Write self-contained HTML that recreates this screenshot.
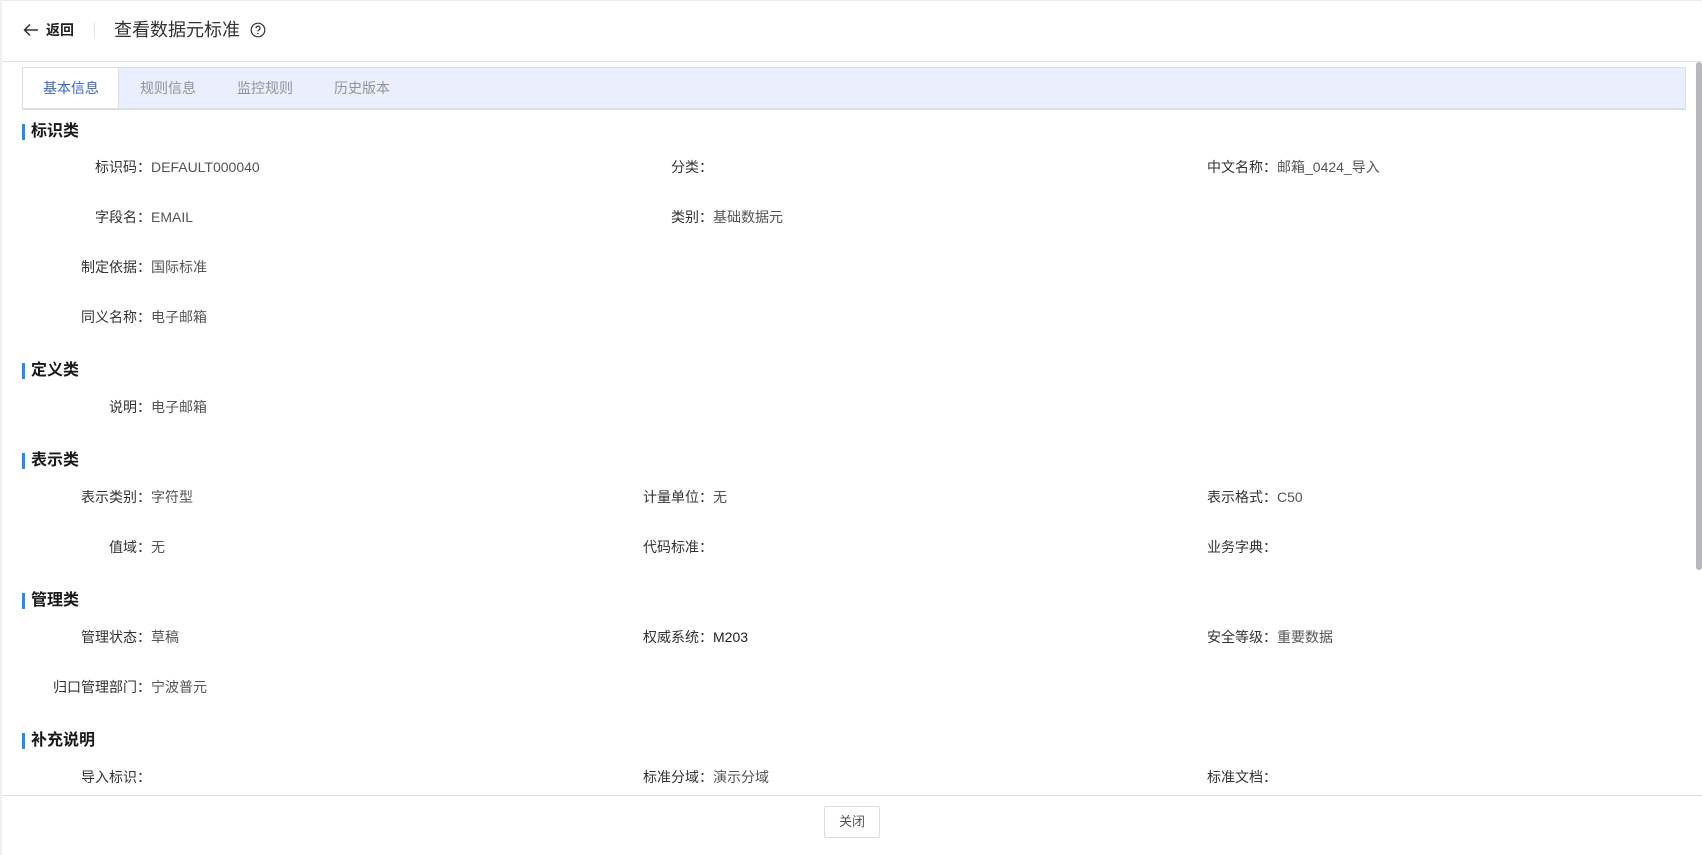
<!DOCTYPE html>
<html><head><meta charset="utf-8"><style>
*{margin:0;padding:0;box-sizing:border-box}
body{width:1702px;height:855px;overflow:hidden;background:#fff;font-family:"Liberation Sans","Noto Sans CJK SC",sans-serif;position:relative;color:#333}
.a{position:absolute;white-space:nowrap}
.st{position:absolute;left:22px;height:16px;border-left:3px solid #1e8cff;padding-left:6px;font-size:16px;font-weight:bold;line-height:16px;color:#1a1a1a;margin-top:1px}
.lb{position:absolute;font-size:14px;line-height:20px;color:#333;text-align:right;width:150px;margin-top:1px}
.v{position:absolute;font-size:14px;line-height:20px;color:#555;margin-top:1px}
.tab{position:absolute;top:78px;font-size:14px;line-height:20px;color:#909399}
</style></head><body>
<div class="a" style="left:0;top:0;width:1702px;height:1px;background:#ececf0"></div>
<div class="a" style="left:0;top:0;width:2px;height:855px;background:#f0f0f2"></div>
<svg class="a" style="left:23px;top:23px" width="16" height="14" viewBox="0 0 16 14"><path d="M15 7H2M7 1.5L1.5 7 7 12.5" fill="none" stroke="#333" stroke-width="1.5"/></svg>
<div class="a" style="left:46px;top:20px;font-size:14px;font-weight:bold;line-height:20px;color:#222">返回</div>
<div class="a" style="left:94px;top:23px;width:1px;height:16px;background:#e4e4e8"></div>
<div class="a" style="left:114px;top:18px;font-size:18px;line-height:24px;color:#333">查看数据元标准</div>
<svg class="a" style="left:250px;top:22px" width="16" height="16" viewBox="0 0 16 16"><circle cx="8" cy="8" r="6.8" fill="none" stroke="#333" stroke-width="1.2"/><path d="M6 6.2a2 2 0 1 1 2.8 1.8c-.6.3-.8.7-.8 1.4" fill="none" stroke="#333" stroke-width="1.2"/><circle cx="8" cy="11.5" r=".8" fill="#333"/></svg>
<div class="a" style="left:2px;top:61px;width:1700px;height:1px;background:#e4e4ea"></div>
<div class="a" style="left:1696px;top:62px;width:6px;height:508px;background:#b8b8bc;border-radius:3px"></div>
<div class="a" style="left:22px;top:67px;width:1664px;height:43px;background:#e9effd;border:1px solid #dcdde3;border-bottom-width:2px"></div>
<div class="a" style="left:23px;top:68px;width:96px;height:40px;background:#fff;border-right:1px solid #dcdde3"></div>
<div class="tab" style="left:43px;color:#3a67c4">基本信息</div>
<div class="tab" style="left:140px">规则信息</div>
<div class="tab" style="left:237px">监控规则</div>
<div class="tab" style="left:334px">历史版本</div>

<div class="st" style="top:123px">标识类</div>
<div class="st" style="top:362px">定义类</div>
<div class="st" style="top:452px">表示类</div>
<div class="st" style="top:592px">管理类</div>
<div class="st" style="top:732px">补充说明</div>

<div class="lb" style="left:1px;top:156px">标识码：</div><div class="v" style="left:151px;top:156px">DEFAULT000040</div>
<div class="lb" style="left:563px;top:156px">分类：</div>
<div class="lb" style="left:1127px;top:156px">中文名称：</div><div class="v" style="left:1277px;top:156px">邮箱_0424_导入</div>
<div class="lb" style="left:1px;top:206px">字段名：</div><div class="v" style="left:151px;top:206px">EMAIL</div>
<div class="lb" style="left:563px;top:206px">类别：</div><div class="v" style="left:713px;top:206px">基础数据元</div>
<div class="lb" style="left:1px;top:256px">制定依据：</div><div class="v" style="left:151px;top:256px">国际标准</div>
<div class="lb" style="left:1px;top:306px">同义名称：</div><div class="v" style="left:151px;top:306px">电子邮箱</div>

<div class="lb" style="left:1px;top:396px">说明：</div><div class="v" style="left:151px;top:396px">电子邮箱</div>

<div class="lb" style="left:1px;top:486px">表示类别：</div><div class="v" style="left:151px;top:486px">字符型</div>
<div class="lb" style="left:563px;top:486px">计量单位：</div><div class="v" style="left:713px;top:486px">无</div>
<div class="lb" style="left:1127px;top:486px">表示格式：</div><div class="v" style="left:1277px;top:486px">C50</div>
<div class="lb" style="left:1px;top:536px">值域：</div><div class="v" style="left:151px;top:536px">无</div>
<div class="lb" style="left:563px;top:536px">代码标准：</div>
<div class="lb" style="left:1127px;top:536px">业务字典：</div>

<div class="lb" style="left:1px;top:626px">管理状态：</div><div class="v" style="left:151px;top:626px">草稿</div>
<div class="lb" style="left:563px;top:626px">权威系统：</div><div class="v" style="left:713px;top:626px;color:#222">M203</div>
<div class="lb" style="left:1127px;top:626px">安全等级：</div><div class="v" style="left:1277px;top:626px">重要数据</div>
<div class="lb" style="left:1px;top:676px">归口管理部门：</div><div class="v" style="left:151px;top:676px">宁波普元</div>

<div class="lb" style="left:1px;top:766px">导入标识：</div>
<div class="lb" style="left:563px;top:766px">标准分域：</div><div class="v" style="left:713px;top:766px">演示分域</div>
<div class="lb" style="left:1127px;top:766px">标准文档：</div>

<div class="a" style="left:2px;top:795px;width:1700px;height:60px;background:#fff;border-top:1px solid #dcdde3"></div>
<div class="a" style="left:824px;top:806px;width:56px;height:32px;border:1px solid #dcdde3;border-radius:2px;font-size:13px;line-height:30px;text-align:center;color:#555">关闭</div>
</body></html>
